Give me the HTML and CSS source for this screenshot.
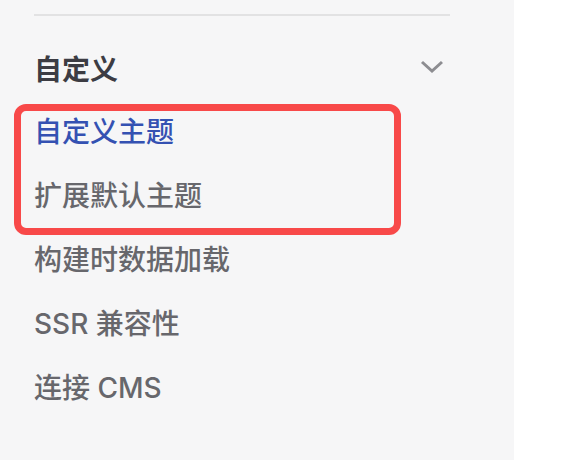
FILE: index.html
```html
<!DOCTYPE html>
<html lang="zh-CN">
<head>
<meta charset="utf-8">
<link rel="stylesheet" href="styles.css">
</head>
<body>
<div class="page">
  <aside class="sidebar">
    <div class="divider"></div>
    <div class="group">
      <div class="group-head">
        <span class="group-title">自定义</span>
        <svg class="chev" width="24" height="24" viewBox="0 0 24 24"><path d="M2 7 L12 16 L22 7" fill="none" stroke="#8d8d91" stroke-width="3"/></svg>
      </div>
      <div class="items">
        <div class="item active">自定义主题</div>
        <div class="item">扩展默认主题</div>
        <div class="item">构建时数据加载</div>
        <div class="item">SSR 兼容性</div>
        <div class="item">连接 CMS</div>
      </div>
      <div class="highlight"></div>
    </div>
  </aside>
  <main class="content"></main>
</div>
</body>
</html>
```

FILE: styles.css
```css
html, body {
  margin: 0;
  padding: 0;
  background: #ffffff;
}
.page {
  display: flex;
  height: 460px;
  font-family: Inter, "Noto Sans CJK SC", sans-serif;
}
.sidebar {
  width: 514px;
  background: #f6f6f7;
  padding: 14px 0 0 34px;
  box-sizing: border-box;
}
.divider {
  width: 416px;
  height: 2px;
  background: #e2e2e3;
}
.group {
  position: relative;
  width: 416px;
  margin-top: 28px;
}
.group-head {
  display: flex;
  align-items: center;
  justify-content: space-between;
  height: 48px;
}
.group-title {
  font-size: 28px;
  font-weight: 700;
  color: #3c3c43;
}
.chev {
  margin-right: 6px;
  margin-top: -2px;
}
.items {
  margin-top: 8px;
}
.item {
  height: 64px;
  line-height: 64px;
  font-size: 28px;
  font-weight: 500;
  color: #67676c;
}
.item.active {
  color: #3451b2;
}
.highlight {
  position: absolute;
  left: -20px;
  top: 60px;
  width: 373px;
  height: 117px;
  border: 7.5px solid #f84949;
  border-radius: 12px;
}
.content {
  flex: 1;
}
```
